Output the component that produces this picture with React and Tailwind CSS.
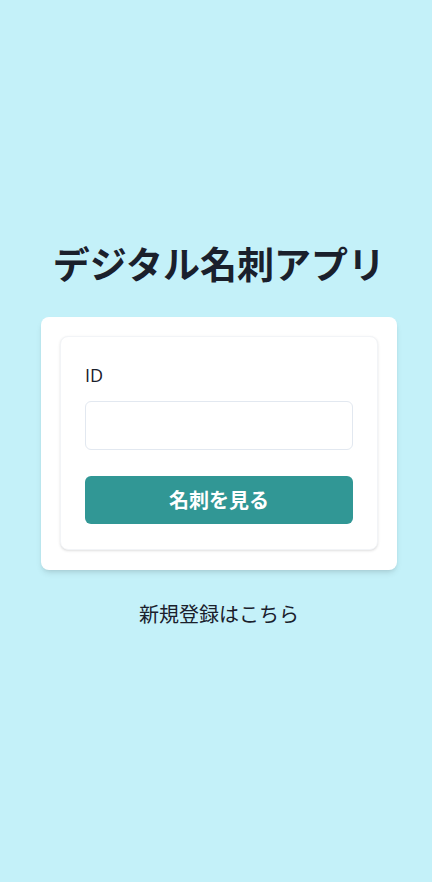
export default function App() {
  return (
    <div
      className="min-h-screen w-full bg-[#C4F1F9] flex flex-col items-center pt-[241px] pl-[6px]"
      style={{ fontFamily: '"Noto Sans CJK JP", "Noto Sans", sans-serif' }}
    >
      <h1 className="text-[37px] leading-[44px] font-bold text-[#1A202C] m-0">
        デジタル名刺アプリ
      </h1>
      <div className="mt-[32px] w-[356px] bg-white rounded-lg shadow-md p-[19px] pb-[20px]">
        <div className="bg-white rounded-lg border border-[#F2F4F7] shadow-sm px-[24px] pt-[25px] pb-[25px]">
          <label
            className="block text-[18px] leading-[27px] font-medium text-[#1A202C] mb-[12px]"
            style={{ fontFamily: '"Open Sans", "Noto Sans CJK JP", sans-serif' }}
          >
            ID
          </label>
          <input
            type="text"
            className="block w-full h-[49px] rounded-md border border-[#E2E8F0] px-4 outline-none bg-white"
          />
          <button className="mt-[26px] w-full h-[48px] rounded-md bg-[#319795] text-white text-[20px] font-bold flex items-center justify-center">
            名刺を見る
          </button>
        </div>
      </div>
      <p className="mt-[29px] text-[20px] leading-[30px] text-[#1A202C]">
        新規登録はこちら
      </p>
    </div>
  );
}
